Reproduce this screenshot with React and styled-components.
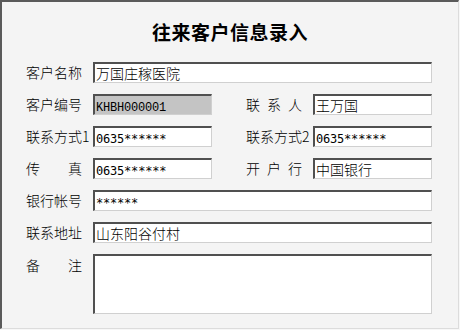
import React from 'react';
import styled, {createGlobalStyle} from 'styled-components';

const GlobalStyle = createGlobalStyle`
  body {
    margin: 0;
    background: #f7f7f7;
    font-family: "Noto Sans CJK SC", "Liberation Sans", sans-serif;
  }
`;

const Frame = styled.div`
  width: 456px;
  height: 326px;
  background: #f4f4f4;
  border-top: 2px solid #5a5a5a;
  border-left: 2px solid #5a5a5a;
  border-right: 1px solid #dcdcdc;
  border-bottom: 1px solid #dcdcdc;
  box-sizing: content-box;
`;

const Title = styled.h2`
  margin: 0;
  padding-top: 18px;
  height: 60px;
  box-sizing: border-box;
  text-align: center;
  font-size: 19px;
  font-weight: 700;
  line-height: 24px;
  color: #000;
  letter-spacing: 0.5px;
`;

const Form = styled.div`
  display: grid;
  grid-template-columns: 67px 119px 34px 67px 119px;
  grid-auto-rows: 21px;
  row-gap: 11px;
  padding: 0 0 0 24px;
`;

const Label = styled.div`
  width: ${p => (p.$wide ? 'auto' : '56px')};
  font-size: 14px;
  font-weight: 300;
  line-height: 21px;
  color: #000;
  white-space: nowrap;
  text-align: ${p => (p.$spread ? 'justify' : 'left')};
  text-align-last: ${p => (p.$spread ? 'justify' : 'auto')};
  align-self: ${p => (p.$top ? 'start' : 'center')};
  ${p => p.$top && 'margin-top: 1px;'}
`;

const Field = styled.div`
  grid-column: ${p => p.$span || 'auto'};
  grid-row: ${p => (p.$tall ? 'span 2' : 'auto')};
  height: ${p => (p.$tall ? '60px' : '21px')};
  box-sizing: border-box;
  background: ${p => (p.$disabled ? '#c4c4c4' : '#fff')};
  border-top: 2px solid #505050;
  border-left: 2px solid #505050;
  border-right: 1px solid #d0d0d0;
  border-bottom: 1px solid #d0d0d0;
  padding: 0 0 0 1px;
  font-size: 14px;
  font-weight: 300;
  line-height: 18px;
  color: #000;
  white-space: nowrap;
  overflow: hidden;
`;

const Code = styled.span`
  font-family: ${p => (p.$serif ? '"Liberation Mono", monospace' : '"DejaVu Sans Mono", monospace')};
  font-weight: 400;
  font-size: 12px;
  letter-spacing: -0.2px;
`;

const App = () => {
    return (
        <>
            <GlobalStyle/>
            <Frame>
                <Title>往来客户信息录入</Title>
                <Form>
                    <Label>客户名称</Label>
                    <Field $span="2 / 6">万国庄稼医院</Field>

                    <Label>客户编号</Label>
                    <Field $disabled><Code $serif>KHBH000001</Code></Field>
                    <span/>
                    <Label $spread>联系人</Label>
                    <Field>王万国</Field>

                    <Label $wide>联系方式1</Label>
                    <Field><Code>0635******</Code></Field>
                    <span/>
                    <Label $wide>联系方式2</Label>
                    <Field><Code>0635******</Code></Field>

                    <Label $spread>传真</Label>
                    <Field><Code>0635******</Code></Field>
                    <span/>
                    <Label $spread>开户行</Label>
                    <Field>中国银行</Field>

                    <Label>银行帐号</Label>
                    <Field $span="2 / 6"><Code>******</Code></Field>

                    <Label>联系地址</Label>
                    <Field $span="2 / 6">山东阳谷付村</Field>

                    <Label $spread $top>备注</Label>
                    <Field $span="2 / 6" $tall/>
                </Form>
            </Frame>
        </>
    );
};

export default App;
